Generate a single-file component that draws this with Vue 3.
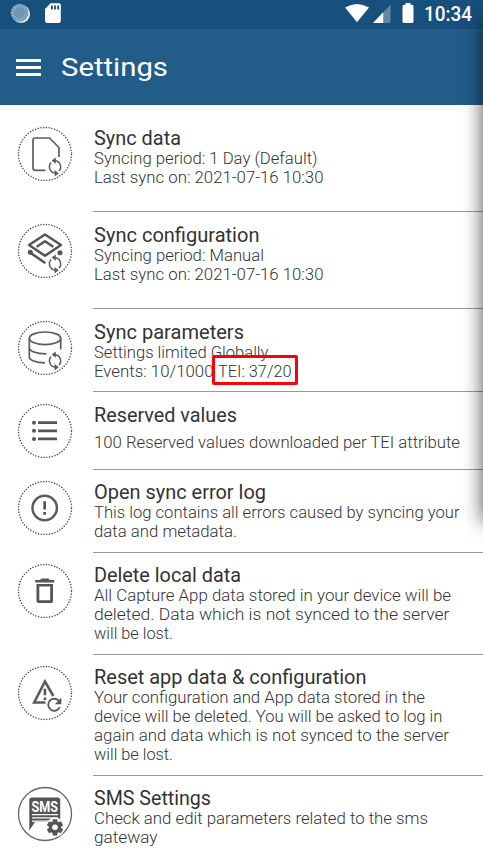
<script setup>
const rows = [
  { icon: 'data', size: 'tall', title: ['Sync data', 87], lines: [['Syncing period: 1 Day (Default)', 223.5], ['Last sync on: 2021-07-16 10:30', 229.5]] },
  { icon: 'config', size: 'tall', title: ['Sync configuration', 165.5], lines: [['Syncing period: Manual', 170], ['Last sync on: 2021-07-16 10:30', 229.5]] },
  { icon: 'params', size: 'medium', title: ['Sync parameters', 150], lines: [['Settings limited Globally', 174.5], ['Events: 10/1000', 119.5, 'TEI: 37/20', 73.5]], mark: true },
  { icon: 'list', size: 'short', title: ['Reserved values', 143], lines: [['100 Reserved values downloaded per TEI attribute', 366]] },
  { icon: 'error', size: 'medium', lower: true, title: ['Open sync error log', 172], lines: [['This log contains all errors caused by syncing your', 365.5], ['data and metadata.', 143]] },
  { icon: 'trash', size: 'large', lower: true, title: ['Delete local data', 147], lines: [['All Capture App data stored in your device will be', 357], ['deleted. Data which is not synced to the server', 355.5], ['will be lost.', 79]] },
  { icon: 'reset', size: 'huge', lower: true, title: ['Reset app data & configuration', 272.5], lines: [['Your configuration and App data stored in the', 331], ['device will be deleted. You will be asked to log in', 348.5], ['again and data which is not synced to the server', 355], ['will be lost.', 79]] },
  { icon: 'sms', size: 'last', lower: true, title: ['SMS Settings', 117], lines: [['Check and edit parameters related to the sms', 334], ['gateway', 63.5]] },
]

// Widens or narrows the letters of a line so that it fills the given width.
const vFit = {
  mounted(el, { value }) {
    const natural = el.getBoundingClientRect().width
    el.style.transform = `scaleX(${value / natural})`
    el.style.marginRight = `${value - natural}px`
  },
}
</script>

<template>
  <div class="screen">
    <div class="status">
      <svg class="status-left" width="70" height="29" viewBox="0 0 70 29">
        <circle cx="21" cy="13.8" r="9" fill="#fff" />
        <circle cx="19.6" cy="12.8" r="9" fill="#6f97b4" />
        <circle cx="19.6" cy="12.8" r="6.7" fill="none" stroke="#a5bfd1" stroke-width="3" stroke-dasharray=".8 1.8" />
        <path d="M50.5 3.300H59q1.800 0 1.800 1.800v16q0 1.800-1.800 1.800H46.800q-1.800 0-1.800-1.800V9z" fill="#fff" />
        <path d="M51 5.500h1.800v4H51zm3.100 0h1.800v4h-1.800zm3.100 0H59v4h-1.800z" fill="#17507c" />
      </svg>
      <svg class="status-right" width="72" height="29" viewBox="0 0 72 29">
        <path d="M0 7.500Q12 .5 24 7.500L12 22.300z" fill="#fff" />
        <path d="M45.500 4.800V23H28z" fill="#6087a5" />
        <path d="M38.200 12.300V23H28z" fill="#fff" />
        <path d="M60.500 3h5v1.800H67q1.500 0 1.500 1.500v15.200q0 1.500-1.500 1.500h-8q-1.500 0-1.500-1.500V6.300q0-1.500 1.500-1.500h1.500z" fill="#fff" />
      </svg>
      <span v-fit="48" class="clock">10:34</span>
    </div>
    <header class="bar">
      <div class="menu"><i></i><i></i><i></i></div>
      <h1 v-fit="107">Settings</h1>
    </header>
    <main>
      <section v-for="row in rows" :key="row.icon" :class="['row', row.size, { lower: row.lower }]">
        <svg class="icon" width="56" height="56" viewBox="0 0 56 56">
          <circle :class="['ring', { solid: row.icon === 'sms' }]" cx="28" cy="28" r="26.500" />
          <g v-if="row.icon === 'data'" class="thin">
            <path d="M28.500 44.300H18.300q-2.300 0-2.300-2.300V14.300Q16 12 18.300 12H32.500L42 21.500V31" />
          </g>
          <g v-if="row.icon === 'config'" class="bold">
            <path d="M28 11.500L44 22 28 32.800 12 22z" />
            <path d="M20.500 23.200L28 18.300l7.500 4.900" />
            <path d="M12.500 29.200L27.500 39.500" />
            <circle cx="13.300" cy="29.300" r="1.300" /><circle cx="43" cy="29.700" r="1.300" />
          </g>
          <g v-if="row.icon === 'params'" class="thin">
            <ellipse cx="28" cy="18.300" rx="15.700" ry="6.300" />
            <path d="M12.300 18.300V37c0 3 6.500 5.700 15.700 5.900M43.700 18.300V29.500M12.300 27.500c0 3.400 6.500 6.500 17.200 6.400" />
          </g>
          <g v-if="['data', 'config', 'params'].includes(row.icon)" class="sync">
            <path d="M34.200 36.600A6.200 6.200 0 0 0 38.500 47.100M42 45.100A6.200 6.200 0 0 0 37.500 34.700" />
            <path d="M34.600 34.600l4.200-3.200v6.400zM41.800 47.200l-4.200-3.200v6.400z" class="tip" />
          </g>
          <g v-if="row.icon === 'list'" class="fill">
            <circle cx="17" cy="19.700" r="2" /><circle cx="17" cy="27.800" r="2" /><circle cx="17" cy="35.900" r="2" />
            <path d="M21 18.300h19v2.800H21zM21 26.400h19v2.800H21zM21 34.500h19v2.800H21z" />
          </g>
          <g v-if="row.icon === 'error'">
            <circle cx="27.700" cy="28" r="12.200" fill="none" stroke="#5b5b5b" stroke-width="2.500" />
            <path class="fill" d="M26.300 21.300h2.700v8.100h-2.700zM26.300 32.100h2.700v2.700h-2.700z" />
          </g>
          <path v-if="row.icon === 'trash'" class="fill" fill-rule="evenodd" d="M18.200 16.900H23l1.500-1.400h6.800l1.500 1.400h4.400v2.700h-19zM19.500 20.900H36v16.500q0 2.600-2.600 2.600H22.100q-2.600 0-2.600-2.600zM22.300 23.600v13.700h10.900V23.600z" />
          <g v-if="row.icon === 'reset'">
            <path d="M28.500 37.500H17.200L28 16.500l8.300 14.500" fill="none" stroke="#5b5b5b" stroke-width="2.600" />
            <path class="fill" d="M26.600 23.800h2.600v6.400h-2.600zM26.600 32.500h2.600v2.500h-2.600z" />
            <path d="M42.300 36.500A6 6 0 1 0 42.800 42" fill="none" stroke="#5b5b5b" stroke-width="1.900" />
            <path class="fill" d="M44.300 32.800v6.500h-6.500z" />
          </g>
          <g v-if="row.icon === 'sms'">
            <path class="fill" d="M15 11.500h25.700q2.500 0 2.500 2.500v22H18L12.300 44.500V14q0-2.500 2.700-2.500z" />
            <path d="M15 28.700h26M15 31.900h26M15 35.100h16" stroke="#fff" stroke-width="1.300" />
            <text x="14.500" y="26" textLength="26.500" lengthAdjust="spacingAndGlyphs">SMS</text>
            <circle cx="38" cy="41.300" r="9.700" fill="#fff" />
            <circle cx="38" cy="41.300" r="4.300" fill="none" stroke="#555" stroke-width="3.400" />
            <path v-for="n in 6" :key="n" class="fill" d="M35.800 33.200h4.400l.7 4.500h-5.800z" :transform="`rotate(${n * 60} 38 41.3)`" />
            <circle cx="38" cy="41.300" r="2.700" fill="#fff" />
          </g>
        </svg>
        <div class="copy">
          <h2><span v-fit="row.title[1]">{{ row.title[0] }}</span></h2>
          <p v-for="line in row.lines" :key="line[0]">
            <span v-fit="line[1]">{{ line[0] }}</span>
            <span v-if="line[2]" v-fit="line[3]" class="tail">{{ line[2] }}</span>
          </p>
          <div v-if="row.mark" class="mark"></div>
        </div>
      </section>
    </main>
    <div class="edge"></div>
  </div>
</template>

<style>
body { margin: 0; background: #fff; }
</style>

<style scoped>
.screen { position: relative; width: 483px; height: 854px; overflow: hidden; background: #fff; font-family: Roboto, "Open Sans", sans-serif; color: #333; }
.status { height: 29px; display: flex; background: #17507c; }
.status-left { flex: none; margin-right: 275px; }
.status-right { flex: none; margin-right: 7px; }
.clock { color: #fff; font-size: 19.500px; line-height: 29px; font-weight: 500; white-space: nowrap; transform-origin: 0 50%; }
.bar { height: 76px; display: flex; align-items: center; background: #225d8a; color: #fff; }
.menu { display: flex; flex-direction: column; gap: 4px; width: 25px; margin-left: 16px; margin-right: 20px; }
.menu i { height: 3px; background: #fff; }
h1 { margin: 0; font-size: 26.500px; line-height: 30px; font-weight: 400; white-space: nowrap; transform-origin: 0 50%; }
main { padding-top: 10px; }
.row { display: flex; box-sizing: border-box; padding: 11px 0 0 17px; }
.icon { flex: none; margin-right: 20px; }
.lower .icon { margin-top: -1px; }
.copy { position: relative; flex: 1; border-bottom: 1px solid #999; padding-top: 1px; }
.lower .copy { padding-top: 0; }
.tall { height: 97px; }
.medium { height: 83px; }
.short { height: 78px; }
.large { height: 102px; }
.huge { height: 121px; }
.last { height: 97px; }
.last .copy { border-bottom: 0; }
h2 { margin: 0; padding-left: .6px; font-size: 19.500px; line-height: 24px; font-weight: 400; white-space: nowrap; }
p { display: flex; margin: 0; padding-left: .6px; font-size: 16px; line-height: 19px; font-weight: 300; white-space: nowrap; }
h2 span, p span { display: inline-block; flex: none; transform-origin: 0 50%; }
p .tail { position: relative; left: 4.500px; }
h2 + p { margin-top: -2px; }
.short h2 + p { margin-top: 5px; }
.mark { position: absolute; left: 119px; top: 35px; width: 80px; height: 24px; border: 3px solid #fa0009; border-radius: 2px; }
.ring { fill: none; stroke: #444; stroke-width: 1.300; stroke-dasharray: 1.300 1.475; }
.ring.solid { stroke: #666; stroke-dasharray: none; }
.thin { fill: none; stroke: #5d5d5d; stroke-width: 1.700; stroke-linejoin: round; }
.bold { fill: none; stroke: #555; stroke-width: 2.500; stroke-linejoin: round; stroke-linecap: round; }
.sync { fill: none; stroke: #5b5b5b; stroke-width: 1.500; }
.tip { fill: #5b5b5b; stroke: none; }
.fill { fill: #555; }
text { fill: #fff; font: 700 15.500px Roboto, sans-serif; }
.edge { position: absolute; left: 484px; top: 22px; width: 20px; height: 499px; box-shadow: 0 0 20px 1px rgba(0, 0, 0, .7); }
</style>
